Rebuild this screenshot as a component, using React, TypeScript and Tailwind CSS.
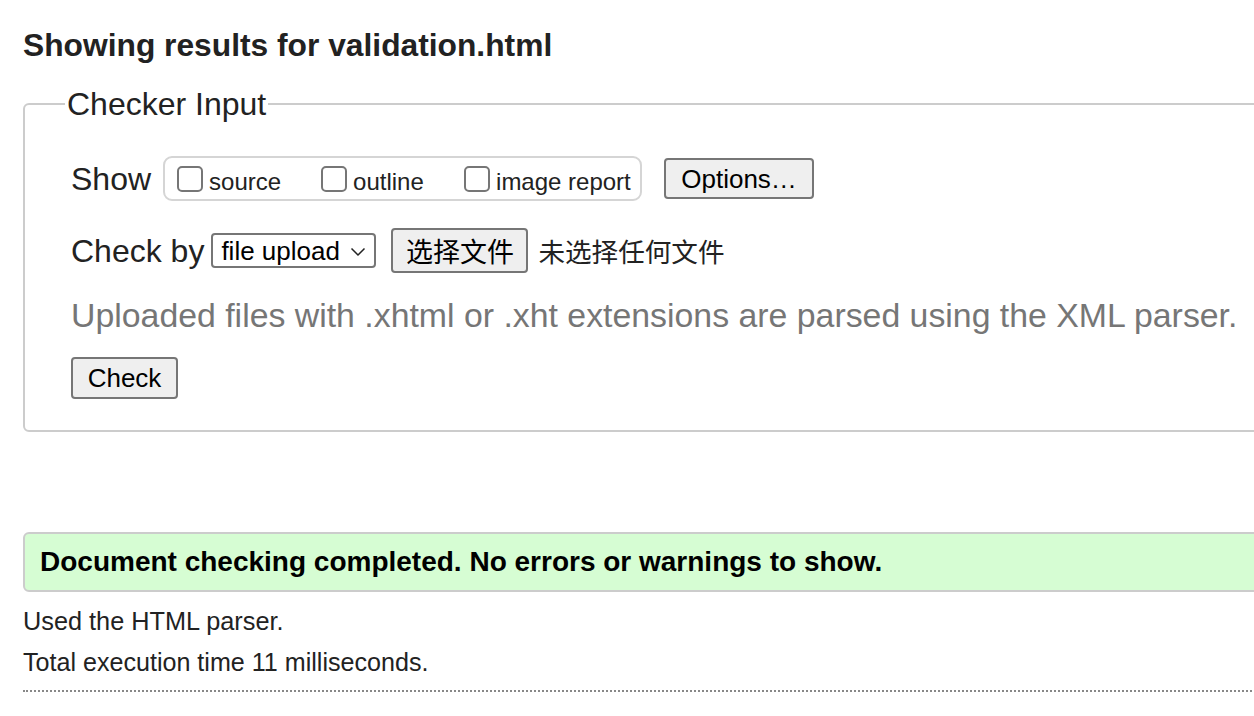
import React from "react";

function Box() {
  return (
    <span className="inline-block w-[26px] h-[26px] border-2 border-[#767676] rounded-[5px] bg-white shrink-0" />
  );
}

export default function App() {
  return (
    <div
      className="w-[1254px] h-[716px] overflow-hidden bg-white text-[#222]"
      style={{ fontFamily: '"Liberation Sans", Arial, "Noto Sans CJK SC", sans-serif' }}
    >
      <div className="pl-[23px] w-[1400px]">
        <h2 className="pt-[27px] text-[31.75px] leading-[36px] font-bold text-[#222]">
          Showing results for validation.html
        </h2>

        <fieldset className="mt-[23px] w-[1300px] h-[346px] border-2 border-[#cccccc] rounded-[6px] pl-[46px] pr-4">
          <legend className="ml-[-6px] px-[2px] text-[32px] leading-[36px] text-[#222]">Checker Input</legend>

          <div className="flex items-center h-[45px] mt-[34px]">
            <span className="text-[32px] leading-[40px] mr-[12px]">Show</span>
            <div className="flex items-center h-[45px] w-[479px] border-2 border-[#d5d5d5] rounded-[9px] pl-[12px]">
              <label className="flex items-center w-[144px]">
                <Box />
                <span className="ml-[6px] text-[24px] leading-[30px] mt-[6px]">source</span>
              </label>
              <label className="flex items-center w-[143px]">
                <Box />
                <span className="ml-[6px] text-[24px] leading-[30px] mt-[6px]">outline</span>
              </label>
              <label className="flex items-center">
                <Box />
                <span className="ml-[6px] text-[24px] leading-[30px] mt-[6px]">image report</span>
              </label>
            </div>
            <button className="ml-[22px] h-[41px] w-[150px] bg-[#efefef] border-2 border-[#767676] rounded-[4px] text-[26px] leading-[30px] text-black">
              Options…
            </button>
          </div>

          <div className="flex items-center h-[45px] mt-[27px]">
            <span className="text-[32px] leading-[40px] mr-[7px]">Check by</span>
            <div className="flex items-center justify-between h-[35px] w-[165px] border-2 border-[#767676] rounded-[4px] pl-[8px] pr-[8px] text-black">
              <span className="text-[26px] leading-[30px]">file upload</span>
              <svg width="16" height="10" viewBox="0 0 16 10" className="mt-[2px]">
                <path d="M1.5 1.5 L8 8 L14.5 1.5" fill="none" stroke="#222" strokeWidth="1.5" />
              </svg>
            </div>
            <button
              className="ml-[15px] h-[45px] w-[137px] bg-[#efefef] border-2 border-[#767676] rounded-[4px] text-[27px] leading-[30px] text-black"
              style={{ fontFamily: '"Noto Sans CJK SC", sans-serif' }}
            >
              选择文件
            </button>
            <span
              className="ml-[10px] text-[26.6px] leading-[30px] text-[#222]"
              style={{ fontFamily: '"Noto Sans CJK SC", sans-serif' }}
            >
              未选择任何文件
            </span>
          </div>

          <p className="mt-[22px] text-[33.85px] leading-[40px] text-[#767676] whitespace-nowrap">
            Uploaded files with .xhtml or .xht extensions are parsed using the XML parser.
          </p>

          <button className="mt-[22px] h-[42px] w-[107px] bg-[#efefef] border-2 border-[#767676] rounded-[4px] text-[26px] leading-[30px] text-black">
            Check
          </button>
        </fieldset>

        <div className="mt-[100px] w-[1300px] h-[60px] bg-[#d6fdd3] border-2 border-[#cccccc] rounded-[6px] flex items-center pl-[15px]">
          <span className="text-[28px] leading-[30px] font-bold text-black">
            Document checking completed. No errors or warnings to show.
          </span>
        </div>

        <p className="mt-[14px] text-[25.3px] leading-[30px] text-[#222]">Used the HTML parser.</p>
        <p className="mt-[11px] text-[25.1px] leading-[30px] text-[#222]">Total execution time 11 milliseconds.</p>
        <div className="mt-[13px] w-[1300px] border-t-2 border-dotted border-[#888]" />
      </div>
    </div>
  );
}
